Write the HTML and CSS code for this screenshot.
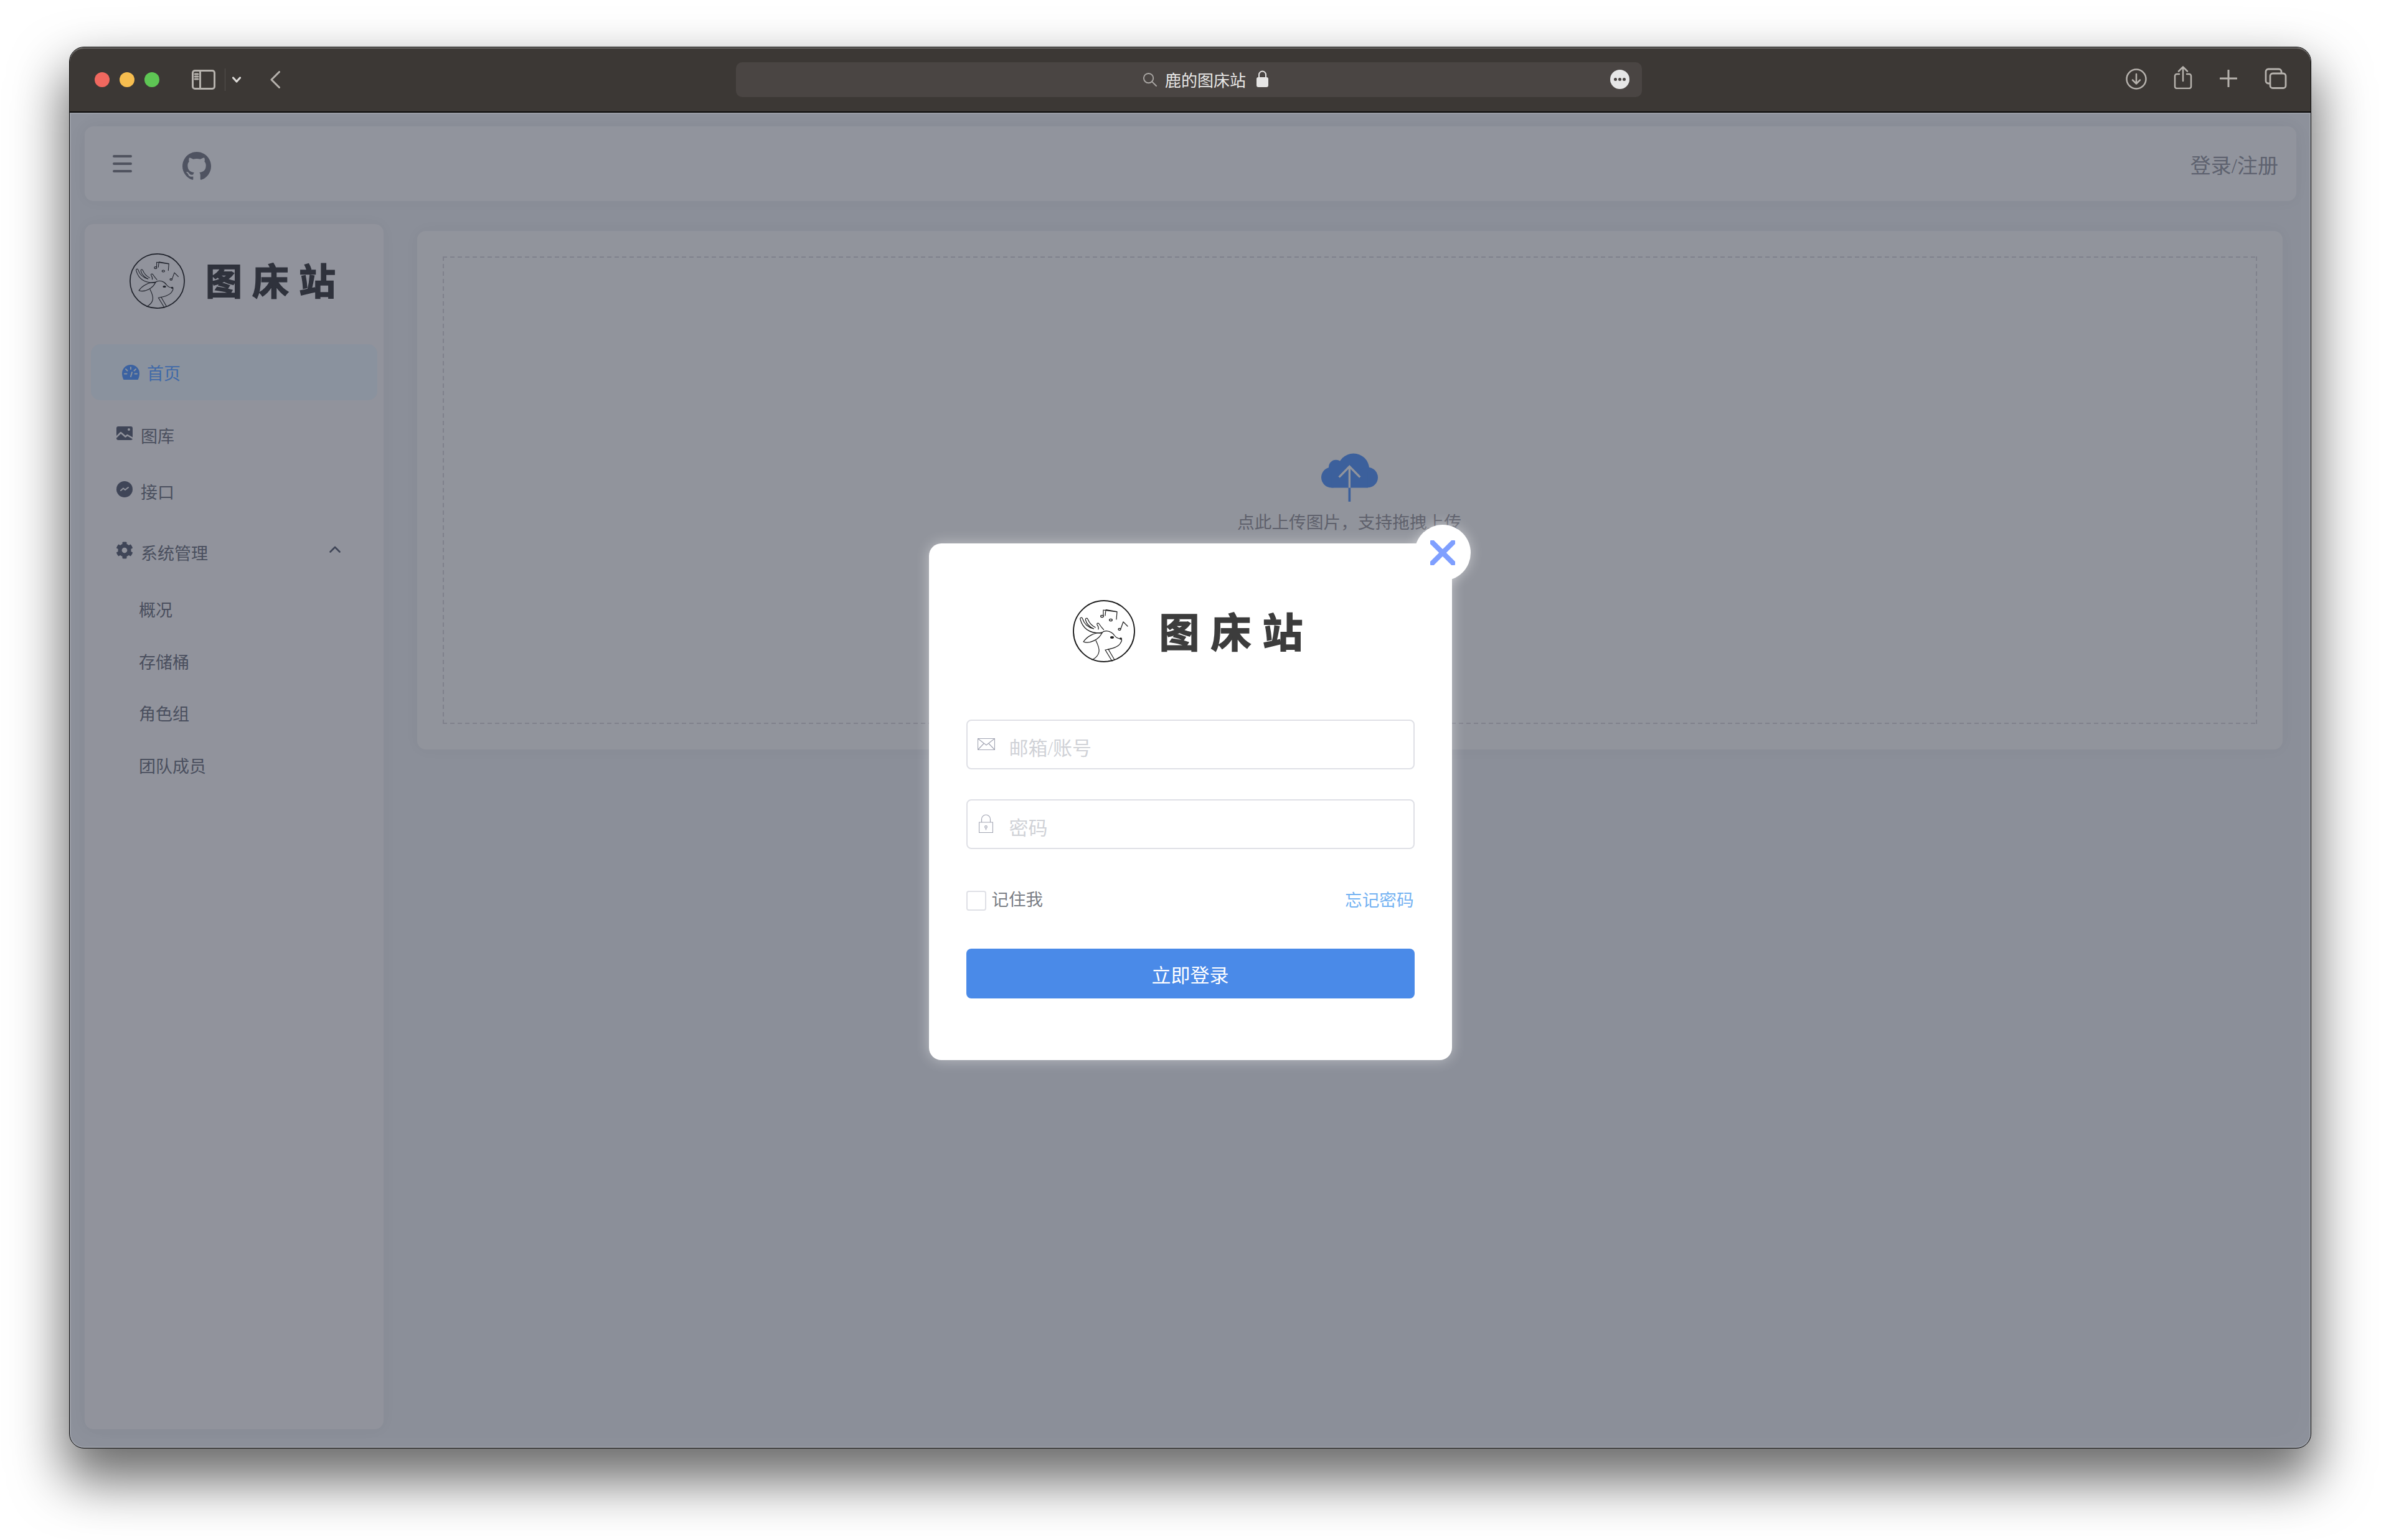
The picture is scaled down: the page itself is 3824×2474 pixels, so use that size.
FILE: index.html
```html
<!DOCTYPE html>
<html lang="zh-CN">
<head>
<meta charset="utf-8">
<title>鹿的图床站</title>
<link rel="stylesheet" href="styles.css">
</head>
<body>
<svg class="defs" width="0" height="0" aria-hidden="true">
  <symbol id="deer" viewBox="0 0 100 100">
    <g fill="none" stroke="currentColor" stroke-linecap="round" stroke-linejoin="round">
      <circle cx="50" cy="50" r="49" stroke-width="1.900"/>
      <g stroke-width="1.200">
        <path d="M47 53C30 54 17 49 12 31c-.7-3 2.600-4 3.600-1 3 9 8 14 18 16"/>
        <path d="M33 46c-6-3-11-8-12.500-14-.7-3 2.600-4 3.700-1 2 5 6 10 12 13"/>
        <path d="M41 47c1-3-.5-5-2-7.500-1-2 1.500-3.500 3-1.500 2 3 5 7 7.500 9.500"/>
        <path d="M17 67c6-9 18-15 30-15-4 11-20 19-30 15z"/>
        <path d="M47 52c7-5 16-1 20 5 3 4 6 5 10 5 3 1 1 5-1 8-4 6-14 8-23 10"/>
        <path d="M37 65c3 6 6 12 5 18-1 6-5 10-11 13"/>
        <path d="M52 80l11 18M57 79l10 17"/>
        <path d="M49 25V16l22 3-1 12M53 16l-1 9M53 15.500l18 3"/>
        <path d="M81 35l-4 11M81 35l7 7"/>
      </g>
      <g fill="currentColor" stroke="none">
        <ellipse cx="63" cy="60" rx="3" ry="1.900"/>
        <ellipse cx="77" cy="62" rx="2" ry="1.700"/>
      </g>
      <g stroke-width="1.300">
        <ellipse cx="47" cy="26" rx="2.300" ry="1.700"/>
        <ellipse cx="61" cy="32" rx="2.300" ry="1.700"/>
        <ellipse cx="75" cy="47" rx="2" ry="1.500"/>
      </g>
    </g>
  </symbol>
</svg>

<main class="window">
  <header class="titlebar">
    <div class="lights">
      <span class="light light-red"></span>
      <span class="light light-yellow"></span>
      <span class="light light-green"></span>
    </div>
    <svg class="chrome-icon side-icon" viewBox="0 0 38 32"><rect x="1.500" y="1.500" width="35" height="29" rx="3.500"/><path d="M13.500 1.500v29M5 7h5M5 11h5M5 15h5"/></svg>
    <span class="chrome-div"></span>
    <svg class="chrome-icon drop-icon" viewBox="0 0 14 10"><path d="M1.500 2l5.500 6 5.500-6"/></svg>
    <svg class="chrome-icon back-icon" viewBox="0 0 16 28"><path d="M14.500 1.500L2 14l12.500 12.500"/></svg>
    <div class="addressbar">
      <svg class="chrome-icon search-icon" viewBox="0 0 24 24"><circle cx="10" cy="10" r="8"/><path d="M16 16l7 7"/></svg>
      <span class="address-text">鹿的图床站</span>
      <svg class="lock-mini" viewBox="0 0 21 27"><path d="M5 12V7a5.500 5.500 0 0 1 11 0v5" fill="none" stroke="#e6e5e4" stroke-width="2"/><rect x="1" y="11" width="19" height="16" rx="3" fill="#e6e5e4"/></svg>
      <span class="more-btn"><i></i><i></i><i></i></span>
    </div>
    <svg class="chrome-icon dl-icon" viewBox="0 0 34 34"><circle cx="17" cy="17" r="15.500"/><path d="M17 9v15M11 18.500l6 6 6-6"/></svg>
    <svg class="chrome-icon share-icon" viewBox="0 0 30 37"><path d="M9 13H5a3 3 0 0 0-3 3v17a3 3 0 0 0 3 3h20a3 3 0 0 0 3-3V16a3 3 0 0 0-3-3h-4M15 24V2M8 8.500L15 1.500l7 7"/></svg>
    <svg class="chrome-icon plus-icon" viewBox="0 0 28 28"><path d="M14 1v26M1 14h26"/></svg>
    <svg class="chrome-icon tabs-icon" viewBox="0 0 36 34"><path d="M8 25H6a4 4 0 0 1-4-4V6a4 4 0 0 1 4-4h17a4 4 0 0 1 4 4v2"/><rect x="9" y="9" width="25" height="23.500" rx="4"/></svg>
  </header>

  <div class="app">
    <div class="topbar">
      <div class="hamburger"><span></span><span></span><span></span></div>
      <svg class="github" viewBox="0 0 16 16"><path d="M8 0C3.580 0 0 3.580 0 8c0 3.540 2.290 6.530 5.470 7.590.4.070.55-.17.55-.38 0-.19-.01-.82-.01-1.490-2.010.37-2.530-.49-2.690-.94-.09-.23-.48-.94-.82-1.130-.28-.15-.68-.52-.01-.53.63-.01 1.080.58 1.230.82.720 1.210 1.870.87 2.330.66.070-.52.28-.87.51-1.070-1.780-.2-3.640-.89-3.640-3.950 0-.87.31-1.590.82-2.150-.08-.2-.36-1.020.08-2.120 0 0 .67-.21 2.200.82.64-.18 1.320-.27 2-.27.68 0 1.360.09 2 .27 1.530-1.040 2.200-.82 2.200-.82.44 1.100.16 1.920.08 2.120.51.56.82 1.270.82 2.150 0 3.070-1.870 3.750-3.650 3.950.29.25.54.73.54 1.480 0 1.070-.01 1.930-.01 2.200 0 .21.15.46.55.38A8.013 8.013 0 0 0 16 8c0-4.420-3.580-8-8-8z"/></svg>
      <a class="login-link">登录/注册</a>
    </div>

    <div class="content">
      <aside class="sidebar">
        <div class="side-logo">
          <svg class="side-deer"><use href="#deer"/></svg>
          <span class="side-logo-text">图床站</span>
        </div>
        <div class="nav-active">
          <svg class="dash-icon" viewBox="0 0 28 24"><path d="M14 0a14 14 0 0 1 14 14c0 3.500-1 7-2.500 10h-23C1 21 0 17.500 0 14A14 14 0 0 1 14 0z"/><path class="dash-cut" d="M14 4v3M6 7l2.500 2.500M22 7l-2.500 2.500M4 14.500h3.500M24 14.500h-3.500M14 19l2-7"/></svg>
          <span>首页</span>
        </div>
        <div class="nav-item nav-first">
          <svg class="nav-icon" viewBox="0 0 26 22"><rect width="26" height="22" rx="3"/><path class="icon-cut" d="M0 17l7-7 7.500 6.500 3-2.500 8.500 5"/><circle class="icon-dot" cx="20" cy="5" r="2"/></svg>
          <span>图库</span>
        </div>
        <div class="nav-item">
          <svg class="nav-icon" viewBox="0 0 26 26"><circle cx="13" cy="13" r="13"/><path class="icon-cut thin" d="M7 15l4-3.500 3 2.500 5-4"/></svg>
          <span>接口</span>
        </div>
        <div class="nav-item nav-group">
          <svg class="nav-icon gear" viewBox="0 0 512 512"><path d="M487.400 315.700l-42.600-24.600c4.300-23.200 4.300-47 0-70.200l42.600-24.600c4.900-2.800 7.100-8.600 5.500-14-11.100-35.600-30-67.800-54.700-94.600-3.800-4.100-10-5.100-14.800-2.300L380.800 110c-17.900-15.400-38.500-27.300-60.800-35.100V25.800c0-5.600-3.900-10.500-9.400-11.700-36.700-8.200-74.300-7.800-109.200 0-5.500 1.200-9.400 6.100-9.400 11.700V75c-22.200 7.900-42.800 19.800-60.800 35.100L88.700 85.500c-4.900-2.800-11-1.900-14.800 2.300-24.700 26.700-43.600 58.900-54.700 94.600-1.700 5.400.6 11.200 5.500 14L67.300 221c-4.300 23.200-4.300 47 0 70.200l-42.600 24.600c-4.900 2.800-7.100 8.600-5.500 14 11.100 35.600 30 67.800 54.700 94.600 3.800 4.100 10 5.100 14.800 2.300l42.600-24.600c17.900 15.400 38.500 27.300 60.800 35.100v49.200c0 5.600 3.900 10.500 9.400 11.700 36.700 8.200 74.300 7.800 109.200 0 5.500-1.200 9.400-6.100 9.400-11.700v-49.200c22.200-7.900 42.800-19.800 60.800-35.100l42.600 24.600c4.900 2.800 11 1.900 14.800-2.300 24.700-26.700 43.600-58.900 54.700-94.600 1.500-5.500-.7-11.300-5.600-14.100zM256 336c-44.100 0-80-35.900-80-80s35.900-80 80-80 80 35.900 80 80-35.900 80-80 80z"/></svg>
          <span>系统管理</span>
          <svg class="group-chevron" viewBox="0 0 18 11"><path d="M1.500 9.500L9 2l7.500 7.500"/></svg>
        </div>
        <div class="nav-sub">概况</div>
        <div class="nav-sub">存储桶</div>
        <div class="nav-sub">角色组</div>
        <div class="nav-sub">团队成员</div>
      </aside>

      <section class="panel">
        <div class="dropzone">
          <svg class="cloud" viewBox="664 148 274 234">
            <g class="cloud-fill">
              <circle cx="714" cy="265" r="50"/>
              <circle cx="735" cy="215" r="35"/>
              <circle cx="820" cy="225" r="76"/>
              <circle cx="889" cy="265" r="49"/>
              <rect x="714" y="240" width="175" height="75"/>
              <rect x="795" y="315" width="11" height="67"/>
            </g>
            <path class="cloud-arrow" d="M800.500 315V212M750 264l50.500-52 51 52"/>
          </svg>
          <p class="drop-text">点此上传图片，支持拖拽上传</p>
        </div>
      </section>
    </div>

    <div class="overlay">
      <div class="modal">
        <button class="close-btn" type="button" aria-label="关闭">
          <svg viewBox="0 0 36 36"><path d="M3 3l30 30M33 3L3 33"/></svg>
        </button>
        <div class="modal-logo">
          <svg class="modal-deer"><use href="#deer"/></svg>
          <span class="modal-logo-text">图床站</span>
        </div>
        <div class="field field-first">
          <span class="field-icon">
            <svg class="mail-svg" viewBox="0 0 28 19"><path d="M.500.500h27v18H.500zM.500.500L14 11 27.500.500M.500 18.500l9.500-10M27.500 18.500l-9.500-10"/></svg>
          </span>
          <span class="placeholder">邮箱/账号</span>
        </div>
        <div class="field field-second">
          <span class="field-icon">
            <svg class="lock-svg" viewBox="0 0 23 30"><path d="M.500 13h22v16.500H.500zM4.500 13V8a7 7 0 0 1 14 0v5M11.500 22.500v3"/><circle cx="11.500" cy="20.500" r="1.800"/></svg>
          </span>
          <span class="placeholder">密码</span>
        </div>
        <div class="options">
          <span class="checkbox"></span>
          <span class="remember">记住我</span>
          <a class="forgot">忘记密码</a>
        </div>
        <button class="submit" type="button">立即登录</button>
      </div>
    </div>
  </div>
</main>
</body>
</html>
```

FILE: styles.css
```css
* { box-sizing: border-box; }

html, body {
  margin: 0;
  width: 3824px;
  height: 2474px;
  overflow: hidden;
  background: #fff;
}

body {
  padding: 75px 112px 147px 111px;
  font-family: "Noto Sans CJK SC", sans-serif;
}

.defs { display: block; height: 0; }

.window {
  position: relative;
  width: 3601px;
  height: 2252px;
  display: flex;
  flex-direction: column;
  border: 1px solid #0c0c0c;
  border-radius: 24px;
  background: #8b8f99;
  box-shadow: 0 44px 84px 8px rgba(0, 0, 0, .58);
  overflow: visible;
}

/* Browser chrome */
.titlebar {
  flex: none;
  height: 105px;
  display: flex;
  align-items: center;
  padding-left: 40px;
  background: #3c3835;
  border-bottom: 2px solid #0a0a0a;
  border-radius: 23px 23px 0 0;
  box-shadow: inset 0 2px 0 #6c6967;
}

.lights { display: flex; gap: 16px; }
.light { width: 24px; height: 24px; border-radius: 50%; }
.light-red { background: #f0685f; }
.light-yellow { background: #f6bd4f; }
.light-green { background: #5ec654; }

.chrome-icon {
  flex: none;
  fill: none;
  stroke: #b6b2ad;
  stroke-width: 3;
  stroke-linecap: round;
  stroke-linejoin: round;
}

.side-icon { width: 38px; height: 32px; margin-left: 52px; }
.chrome-div { flex: none; width: 1px; height: 36px; margin-left: 15px; background: #55514e; }
.drop-icon { width: 14px; height: 10px; margin-left: 11px; stroke: #dcdad7; stroke-width: 3.200; }
.back-icon { width: 16px; height: 28px; margin-left: 47px; }

.addressbar {
  flex: none;
  position: relative;
  width: 1455px;
  height: 56px;
  margin-left: 732px;
  display: flex;
  align-items: center;
  padding-left: 653px;
  background: #4a4543;
  border-radius: 10px;
}

.search-icon { width: 23px; height: 23px; stroke-width: 2; stroke: #aaa7a4; }
.address-text { margin-left: 13px; font-size: 26px; line-height: 30px; color: #e8e7e6; white-space: nowrap; }
.lock-mini { flex: none; width: 21px; height: 27px; margin-left: 16px; margin-top: -3px; }

.more-btn {
  position: absolute;
  left: 1404px;
  top: 12px;
  width: 31px;
  height: 31px;
  display: flex;
  align-items: center;
  justify-content: center;
  gap: 2px;
  border-radius: 50%;
  background: #e6e6e6;
}
.more-btn i { width: 5px; height: 5px; border-radius: 50%; background: #4a4543; }

.dl-icon { width: 34px; height: 34px; margin-left: 777px; margin-bottom: 2px; stroke-width: 2.500; }
.share-icon { width: 30px; height: 37px; margin-left: 43px; margin-bottom: 6px; stroke-width: 2.500; }
.plus-icon { width: 28px; height: 28px; margin-left: 44px; margin-bottom: 3px; }
.tabs-icon { width: 36px; height: 34px; margin-left: 44px; margin-bottom: 3px; stroke-width: 2.800; }

/* Dimmed application */
.app {
  position: relative;
  flex: 1;
  min-height: 0;
  display: flex;
  flex-direction: column;
  padding: 22px 23px 30px 24px;
  border-radius: 0 0 23px 23px;
  box-shadow: inset 0 0 0 2px rgba(255, 255, 255, .12), inset 0 0 60px rgba(255, 255, 255, .04);
}

.topbar {
  flex: none;
  height: 120px;
  display: flex;
  align-items: center;
  padding: 0 29px 0 45px;
  background: #91949d;
  border-radius: 14px;
  box-shadow: 0 0 26px rgba(0, 0, 0, .03);
}

.hamburger { display: flex; flex-direction: column; gap: 8px; }
.hamburger span { display: block; width: 31px; height: 4px; border-radius: 2px; background: #50535f; }

.github { width: 48px; height: 46px; margin-left: 80px; fill: #4f5361; margin-top: 8px; }

.login-link {
  margin-left: auto;
  font-family: "Liberation Serif", "Noto Sans CJK SC", serif;
  font-size: 33px;
  line-height: 40px;
  color: #5e626f;
  margin-top: 8px;
}

.content {
  flex: 1;
  min-height: 0;
  display: flex;
  align-items: flex-start;
  padding-top: 37px;
}

.sidebar {
  flex: none;
  width: 480px;
  height: 100%;
  padding-top: 47px;
  background: #91939c;
  border-radius: 14px;
  box-shadow: 0 0 26px rgba(0, 0, 0, .03);
}

.side-logo { display: flex; align-items: center; padding-left: 72px; }
.side-deer { flex: none; width: 89px; height: 89px; color: #1f222b; }
.side-logo-text {
  margin: -6px 0 0 33px;
  font-size: 59px;
  line-height: 60px;
  letter-spacing: 16px;
  font-weight: 700;
  color: #2f323c;
  white-space: nowrap;
  -webkit-text-stroke: 1.500px #2f323c;
}

.nav-active {
  height: 90px;
  margin: 57px 10px 0;
  padding-left: 50px;
  display: flex;
  align-items: center;
  gap: 12px;
  background: #8a929e;
  border-radius: 15px;
  font-size: 27px;
  color: #3f69a8;
}

.dash-icon { flex: none; width: 28px; height: 24px; fill: #3b62a1; }
.dash-cut { fill: none; stroke: #8a929e; stroke-width: 2; stroke-linecap: round; }

.nav-item {
  height: 90px;
  padding-left: 51px;
  display: flex;
  align-items: center;
  gap: 13px;
  font-size: 27px;
  color: #4a4f5e;
}

.nav-first { margin-top: 11px; }
.nav-group { margin-top: 8px; position: relative; }

.nav-icon { flex: none; width: 26px; height: 26px; fill: #3f4557; }
.nav-first .nav-icon { height: 24px; margin-top: -4px; }
.nav-item .nav-icon { margin-top: -6px; }
.gear { width: 28px; height: 28px; margin-left: -1px; margin-right: -1px; }
.icon-cut { fill: none; stroke: #91939c; stroke-width: 2.500; stroke-linejoin: round; stroke-linecap: round; }
.icon-cut.thin { stroke-width: 2; }
.icon-dot { fill: #91939c; }

.group-chevron {
  position: absolute;
  left: 393px;
  top: 35px;
  width: 18px;
  height: 11px;
  fill: none;
  stroke: #3f4557;
  stroke-width: 2.600;
  stroke-linecap: round;
  stroke-linejoin: round;
}

.nav-sub {
  height: 83.600px;
  padding-left: 87px;
  display: flex;
  align-items: center;
  font-size: 27px;
  color: #4a4f5e;
}
.nav-group + .nav-sub { margin-top: 5px; }

.panel {
  flex: none;
  width: 2996px;
  height: 833px;
  margin: 11px 0 0 54px;
  padding: 41px;
  background: #91949c;
  border-radius: 14px;
  box-shadow: 0 0 26px rgba(0, 0, 0, .03);
}

.dropzone {
  height: 100%;
  display: flex;
  flex-direction: column;
  align-items: center;
  padding-top: 316px;
  background:
    repeating-linear-gradient(90deg, #7f818c 0 7px, transparent 7px 12px) left top / 100% 2px no-repeat,
    repeating-linear-gradient(90deg, #7f818c 0 7px, transparent 7px 12px) left bottom / 100% 2px no-repeat,
    repeating-linear-gradient(180deg, #7f818c 0 7px, transparent 7px 12px) left top / 2px 100% no-repeat,
    repeating-linear-gradient(180deg, #7f818c 0 7px, transparent 7px 12px) right top / 2px 100% no-repeat;
}

.cloud { flex: none; width: 91px; height: 78px; margin-left: -2px; }
.cloud-fill { fill: #3c609c; }
.cloud-arrow { fill: none; stroke: #91949c; stroke-width: 10; }

.drop-text {
  margin: 14px 0 0 -2px;
  font-family: "Liberation Serif", "Noto Sans CJK SC", serif;
  font-size: 27.700px;
  line-height: 40px;
  color: #5f616c;
  white-space: nowrap;
}

/* Login dialog */
.overlay {
  position: absolute;
  inset: 0;
  display: flex;
  justify-content: center;
  align-items: flex-start;
  padding-top: 692px;
}

.modal {
  position: relative;
  width: 840px;
  height: 830px;
  padding: 91px 60px 0;
  background: #fff;
  border-radius: 20px;
  box-shadow: 0 0 22px rgba(255, 255, 255, .42);
}

.close-btn {
  position: absolute;
  top: -30px;
  right: -30px;
  width: 90px;
  height: 90px;
  padding: 0;
  display: flex;
  align-items: center;
  justify-content: center;
  border: 0;
  border-radius: 50%;
  background: #fff;
  box-shadow: 0 0 20px rgba(255, 255, 255, .45);
}
.close-btn svg { width: 40px; height: 40px; fill: none; stroke: #7f9fff; stroke-width: 7.500; stroke-linecap: round; }

.modal-logo { display: flex; align-items: center; padding-left: 171px; }
.modal-deer { flex: none; width: 100px; height: 100px; color: #1c1c1c; }
.modal-logo-text {
  margin: -4px 0 0 39px;
  font-size: 65px;
  line-height: 66px;
  letter-spacing: 18px;
  font-weight: 700;
  color: #3c3c3c;
  white-space: nowrap;
  -webkit-text-stroke: 1.500px #3c3c3c;
}

.field {
  height: 80px;
  display: flex;
  align-items: center;
  padding-left: 16px;
  border: 2px solid #dfe0e6;
  border-radius: 8px;
}
.field-first { margin-top: 92px; }
.field-second { margin-top: 48px; }

.field-icon { flex: none; width: 28px; display: flex; justify-content: center; margin-top: -2px; }
.mail-svg { width: 28px; height: 19px; }
.lock-svg { width: 23px; height: 30px; }
.mail-svg, .lock-svg { fill: none; stroke: #a3a6b4; stroke-width: 1.200; }

.placeholder {
  margin: 13px 0 0 23px;
  font-family: "Liberation Serif", "Noto Sans CJK SC", serif;
  font-size: 31px;
  line-height: 40px;
  color: #d0d2d7;
}

.options { height: 32px; margin-top: 67px; display: flex; align-items: center; }
.checkbox { flex: none; width: 32px; height: 32px; border: 2px solid #dfe0e6; border-radius: 4px; }
.remember {
  margin-left: 9px;
  font-family: "Liberation Serif", "Noto Sans CJK SC", serif;
  font-size: 27.500px;
  color: #7a7e85;
  line-height: 32px;
  margin-top: -3px;
}
.forgot { margin-left: auto; margin-top: -6px; margin-right: 1px; line-height: 32px; font-size: 27.600px; color: #74b2f2; }

.submit {
  display: block;
  width: 720px;
  height: 80px;
  margin-top: 61px;
  padding: 0;
  border: 0;
  border-radius: 8px;
  background: #4a8ae8;
  font-family: "Liberation Serif", "Noto Sans CJK SC", serif;
  font-size: 31px;
  color: #fff;
}
```
